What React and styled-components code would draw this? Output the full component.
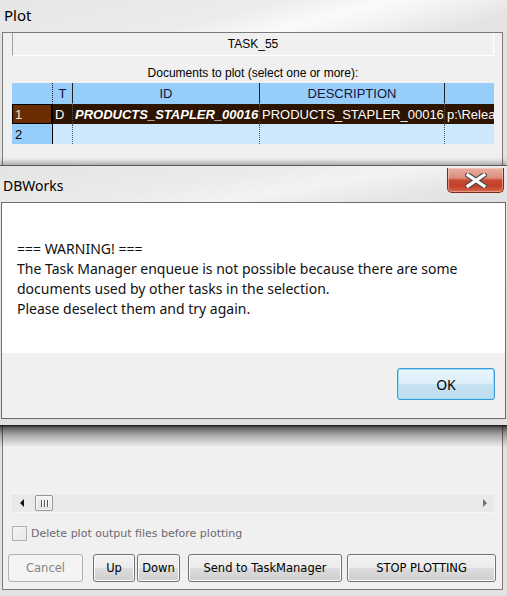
import React from 'react'
import styled, { createGlobalStyle } from 'styled-components'

const GlobalStyle = createGlobalStyle`
    html, body {
        margin: 0;
        padding: 0;
    }
    body {
        background: #e6e6e6;
        overflow: hidden;
    }
`

const UI_FONT = `"Noto Sans", "Open Sans", sans-serif`
const GRID_FONT = `"Liberation Sans", Arial, sans-serif`
const TAHOMA = `"DejaVu Sans", Verdana, sans-serif`

const COLUMNS = [41, 20, 187, 185, 49]

const ROWS = [
    {
        no: '1',
        type: 'D',
        id: 'PRODUCTS_STAPLER_00016',
        desc: 'PRODUCTS_STAPLER_00016',
        path: 'p:\\Relea',
        selected: true,
    },
    { no: '2', type: '', id: '', desc: '', path: '', selected: false },
]

const MESSAGE = [
    '=== WARNING! ===',
    'The Task Manager enqueue is not possible because there are some',
    'documents used by other tasks in the selection.',
    'Please deselect them and try again.',
]

const App = () => {
    return (
        <S.Window>
            <GlobalStyle />
            <S.TitleBar>
                <S.Title>Plot</S.Title>
            </S.TitleBar>
            <S.Client>
                <S.TaskBox>TASK_55</S.TaskBox>
                <S.Caption>Documents to plot (select one or more):</S.Caption>
                <S.GridPanel>
                    <S.Table>
                        <S.HeadCell $corner />
                        <S.HeadCell>T</S.HeadCell>
                        <S.HeadCell>ID</S.HeadCell>
                        <S.HeadCell>DESCRIPTION</S.HeadCell>
                        <S.HeadCell $last />
                        {ROWS.map((row) => (
                            <React.Fragment key={row.no}>
                                <S.RowHead $selected={row.selected}>{row.no}</S.RowHead>
                                <S.Cell $selected={row.selected}>{row.type}</S.Cell>
                                <S.Cell $selected={row.selected} $strong>
                                    {row.id}
                                </S.Cell>
                                <S.Cell $selected={row.selected}>{row.desc}</S.Cell>
                                <S.Cell $selected={row.selected} $last>
                                    {row.path}
                                </S.Cell>
                            </React.Fragment>
                        ))}
                    </S.Table>
                    <S.ScrollBar>
                        <S.Arrow>
                            <svg width="5" height="8" viewBox="0 0 5 8">
                                <path d="M4 0 L0 4 L4 8 Z" fill="#111" />
                            </svg>
                        </S.Arrow>
                        <S.Thumb>
                            <S.Grip />
                            <S.Grip />
                            <S.Grip />
                        </S.Thumb>
                        <S.Track />
                        <S.Arrow>
                            <svg width="5" height="8" viewBox="0 0 5 8">
                                <path d="M1 0 L5 4 L1 8 Z" fill="#6f6f6f" />
                            </svg>
                        </S.Arrow>
                    </S.ScrollBar>
                </S.GridPanel>
                <S.CheckRow>
                    <S.CheckBox />
                    <S.CheckLabel>Delete plot output files before plotting</S.CheckLabel>
                </S.CheckRow>
                <S.ButtonRow>
                    <S.Button $w={75} $ml={5} disabled>
                        Cancel
                    </S.Button>
                    <S.Button $w={42} $ml={10}>
                        Up
                    </S.Button>
                    <S.Button $w={43} $ml={2}>
                        Down
                    </S.Button>
                    <S.Button $w={154} $ml={8}>
                        Send to TaskManager
                    </S.Button>
                    <S.Button $w={149} $ml={5}>
                        STOP PLOTTING
                    </S.Button>
                </S.ButtonRow>
            </S.Client>

            <S.Dialog>
                <S.DialogTitleBar>
                    <S.DialogTitle>DBWorks</S.DialogTitle>
                    <S.CloseButton>
                        <svg width="22" height="15" viewBox="0 0 22 15">
                            <path
                                d="M3 2 L19 13 M19 2 L3 13"
                                stroke="#4a4a4a"
                                strokeWidth="5.5"
                                strokeLinecap="square"
                            />
                            <path
                                d="M3 2 L19 13 M19 2 L3 13"
                                stroke="#fff"
                                strokeWidth="3.2"
                                strokeLinecap="square"
                            />
                        </svg>
                    </S.CloseButton>
                </S.DialogTitleBar>
                <S.DialogClient>
                    <S.Message>
                        {MESSAGE.map((line) => (
                            <div key={line}>{line}</div>
                        ))}
                    </S.Message>
                    <S.Footer>
                        <S.OkButton>OK</S.OkButton>
                    </S.Footer>
                </S.DialogClient>
            </S.Dialog>
        </S.Window>
    )
}

const S = {
    Window: styled.div`
        position: relative;
        display: flex;
        flex-direction: column;
        width: 507px;
        height: 596px;
        overflow: hidden;
        background: #e2e2e2;
    `,
    TitleBar: styled.div`
        display: flex;
        align-items: center;
        height: 32px;
        padding-left: 4px;
        background: linear-gradient(
            165deg,
            #e6e6e6 0%,
            #ececec 45%,
            #fafafa 62%,
            #f4f4f4 72%,
            #e4e4e4 90%
        );
    `,
    Title: styled.div`
        font-family: ${UI_FONT};
        font-size: 15px;
        color: #000;
        margin-top: -3px;
    `,
    Client: styled.div`
        display: flex;
        flex-direction: column;
        flex: 1;
        margin: 0 4px 6px 2px;
        border: 1px solid #7b7b7b;
        background: #f0f0f0;
    `,
    TaskBox: styled.div`
        display: flex;
        align-items: center;
        justify-content: center;
        height: 23px;
        box-sizing: border-box;
        margin: 0 8px 0 9px;
        border-left: 1px solid #a0a0a0;
        border-right: 1px solid #fff;
        border-bottom: 1px solid #fff;
        font-family: ${GRID_FONT};
        font-size: 12px;
        color: #000;
    `,
    Caption: styled.div`
        display: flex;
        align-items: flex-end;
        justify-content: center;
        height: 27px;
        box-sizing: border-box;
        padding-bottom: 3px;
        margin: 0 8px 0 9px;
        font-family: ${GRID_FONT};
        font-size: 12px;
        line-height: 14px;
        color: #000;
    `,
    GridPanel: styled.div`
        display: flex;
        flex-direction: column;
        flex: 1;
        margin: 0 8px 0 9px;
    `,
    Table: styled.div`
        display: grid;
        grid-template-columns: ${COLUMNS.map((w) => `${w}px`).join(' ')};
        grid-template-rows: 21px 20px 20px;
        font-family: ${GRID_FONT};
        font-size: 13px;
    `,
    HeadCell: styled.div`
        display: flex;
        align-items: center;
        justify-content: center;
        background: #96cdfa;
        color: #15153a;
        border-right: ${({ $last }) => ($last ? 'none' : '1px solid #222')};
        border-bottom: 1px solid #96cdfa;
        ${({ $corner }) => $corner && 'border-right: 1px dotted #222;'}
    `,
    RowHead: styled.div`
        display: flex;
        align-items: center;
        padding-left: 3px;
        background: ${({ $selected }) => ($selected ? '#6a2d02' : '#96cdfa')};
        color: ${({ $selected }) => ($selected ? '#f6e2cc' : '#000')};
        border-right: 1px solid #000;
        box-shadow: ${({ $selected }) => ($selected ? 'inset 0 0 0 1px #000' : 'none')};
    `,
    Cell: styled.div`
        display: flex;
        align-items: center;
        padding-left: 2px;
        overflow: hidden;
        white-space: nowrap;
        background: ${({ $selected }) => ($selected ? '#2c1400' : '#cde8fd')};
        color: ${({ $selected }) => ($selected ? '#fff' : '#000')};
        font-weight: ${({ $strong }) => ($strong ? 'bold' : 'normal')};
        font-style: ${({ $strong }) => ($strong ? 'italic' : 'normal')};
        border-right: ${({ $last }) => ($last ? 'none' : '1px dotted #555')};
    `,
    ScrollBar: styled.div`
        display: flex;
        align-items: center;
        height: 20px;
        margin-top: auto;
        box-sizing: border-box;
        background: #e9e9e9;
        border-top: 1px solid #f6f6f6;
        border-bottom: 1px solid #f6f6f6;
    `,
    Arrow: styled.div`
        display: flex;
        align-items: center;
        justify-content: center;
        width: 20px;
        height: 100%;
    `,
    Thumb: styled.div`
        display: flex;
        align-items: center;
        justify-content: center;
        gap: 2px;
        width: 18px;
        height: 16px;
        margin-left: 3px;
        box-sizing: border-box;
        border: 1px solid #979797;
        border-radius: 2px;
        background: linear-gradient(#f3f3f3, #e0e0e0);
        box-shadow: inset 0 0 0 1px #fbfbfb;
    `,
    Grip: styled.div`
        width: 1px;
        height: 7px;
        background: #555;
        box-shadow: 1px 0 0 #fff;
    `,
    Track: styled.div`
        flex: 1;
    `,
    CheckRow: styled.div`
        display: flex;
        align-items: center;
        height: 15px;
        margin: 13px 0 0 9px;
    `,
    CheckBox: styled.div`
        width: 15px;
        height: 15px;
        box-sizing: border-box;
        border: 1px solid #b1b1b1;
        background: linear-gradient(135deg, #f4f4f4, #e8e8e8);
    `,
    CheckLabel: styled.div`
        margin-left: 4px;
        font-family: ${TAHOMA};
        font-size: 11px;
        color: #6d6870;
    `,
    ButtonRow: styled.div`
        display: flex;
        height: 28px;
        margin-top: 13px;
        margin-bottom: 7px;
    `,
    Button: styled.button`
        width: ${({ $w }) => $w}px;
        height: 28px;
        margin: 0 0 0 ${({ $ml }) => $ml}px;
        padding: 0;
        box-sizing: border-box;
        border: 1px solid #707070;
        border-radius: 3px;
        background: linear-gradient(#f2f2f2 0%, #ebebeb 50%, #dddddd 50%, #cfcfcf 100%);
        box-shadow: inset 0 0 0 1px #fcfcfc;
        font-family: ${TAHOMA};
        font-size: 11.5px;
        color: #000;

        &:disabled {
            border-color: #adb2b5;
            background: #f4f4f4;
            box-shadow: none;
            color: #838383;
        }
    `,
    Dialog: styled.div`
        position: absolute;
        top: 165px;
        left: 0;
        display: flex;
        flex-direction: column;
        width: 507px;
        height: 260px;
        background: linear-gradient(#e9e9e9, #e0e0e0);
        border-top: 1px solid #5a5a5a;
        box-sizing: border-box;
        box-shadow: 0 -3px 5px rgba(0, 0, 0, 0.3);

        &::after {
            content: '';
            position: absolute;
            left: 0;
            right: 0;
            top: 100%;
            height: 22px;
            background: linear-gradient(
                rgba(0, 0, 0, 0.9) 0%,
                rgba(0, 0, 0, 0.6) 12%,
                rgba(0, 0, 0, 0.3) 45%,
                rgba(0, 0, 0, 0) 100%
            );
        }
    `,
    DialogTitleBar: styled.div`
        display: flex;
        align-items: flex-start;
        height: 36px;
        background: linear-gradient(
            170deg,
            #e4e4e4 0%,
            #ebebeb 40%,
            #f3f3f3 60%,
            #e6e6e6 80%,
            #e0e0e0 100%
        );
    `,
    DialogTitle: styled.div`
        margin: 10px 0 0 3px;
        font-family: ${UI_FONT};
        font-size: 14px;
        line-height: 20px;
        color: #000;
    `,
    CloseButton: styled.div`
        display: flex;
        align-items: center;
        justify-content: center;
        width: 57px;
        height: 25px;
        margin: 2px 3px 0 auto;
        box-sizing: border-box;
        border: 1px solid #7c2a1c;
        border-top: none;
        border-radius: 0 0 5px 5px;
        background: linear-gradient(
            #eab0a4 0%,
            #dd8e7e 40%,
            #c94a33 52%,
            #c33f28 75%,
            #d9674c 100%
        );
        box-shadow: inset 0 0 0 1px rgba(255, 220, 210, 0.45);
    `,
    DialogClient: styled.div`
        display: flex;
        flex-direction: column;
        margin: 0 1px 6px 1px;
        border: 1px solid #6c6c6c;
        background: #fff;
    `,
    Message: styled.div`
        height: 150px;
        box-sizing: border-box;
        padding: 36px 0 0 15px;
        font-family: ${UI_FONT};
        font-size: 14px;
        line-height: 20px;
        color: #111;
    `,
    Footer: styled.div`
        display: flex;
        justify-content: flex-end;
        align-items: flex-start;
        height: 65px;
        box-sizing: border-box;
        padding: 15px 10px 0 0;
        background: #f0f0f0;
    `,
    OkButton: styled.button`
        width: 98px;
        height: 32px;
        padding: 0;
        box-sizing: border-box;
        border: 1px solid #3c9bd6;
        border-radius: 3px;
        background: linear-gradient(#eaf5fc 0%, #dcedf8 50%, #c6e2f3 52%, #bcdcee 100%);
        box-shadow: inset 0 0 0 1px #9fdcf8;
        font-family: ${UI_FONT};
        font-size: 14px;
        color: #000;
    `,
}

export default App
